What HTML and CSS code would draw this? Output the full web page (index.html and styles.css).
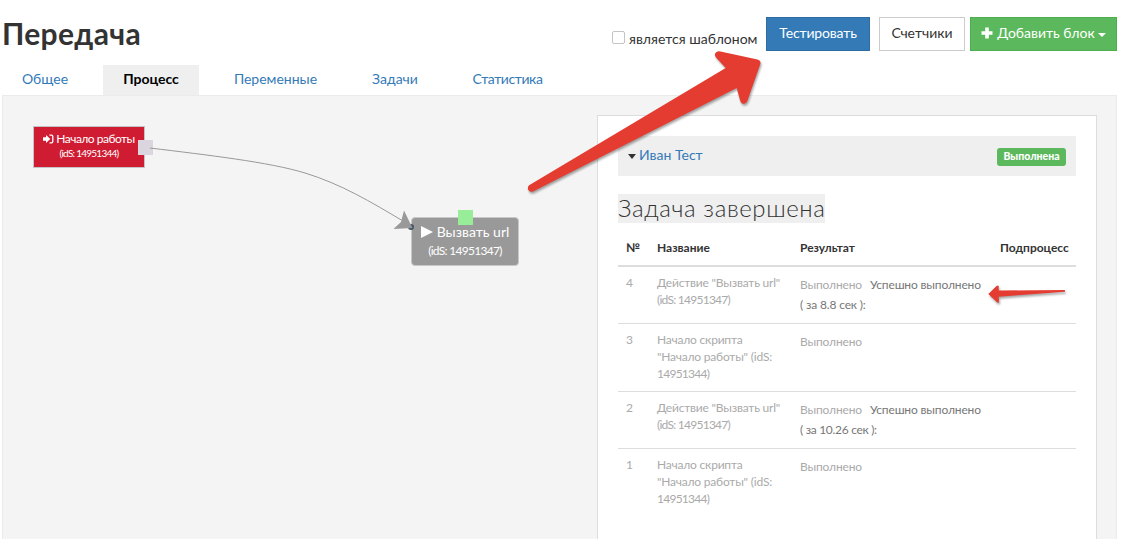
FILE: index.html
```html
<!DOCTYPE html>
<html lang="ru">
<head>
  <meta charset="UTF-8">
  <meta name="viewport" content="width=device-width, initial-scale=1.0">
  <title>Передача</title>
  <link rel="stylesheet" href="styles.css">
</head>
<body>
  <header class="header">
    <h1>Передача</h1>
    <div class="toolbar">
      <label class="template"><input type="checkbox"><span>является шаблоном</span></label>
      <button class="btn btn-primary">Тестировать</button>
      <button class="btn btn-default">Счетчики</button>
      <button class="btn btn-success">
        <svg class="plus" viewBox="0 0 12 12"><path d="M4.2 0.5h3.6v3.700h3.700v3.600H7.800v3.700H4.200V7.800H0.500V4.200h3.700z"/></svg>
        <span>Добавить блок</span>
        <i class="caret"></i>
      </button>
    </div>
  </header>

  <nav class="tabs">
    <a href="#">Общее</a>
    <a href="#" class="active">Процесс</a>
    <a href="#">Переменные</a>
    <a href="#">Задачи</a>
    <a href="#" class="stats">Статистика</a>
  </nav>

  <main class="canvas">
    <svg class="link" viewBox="0 0 270 90">
      <path class="link-line" d="M3 12C60 19 122 26 158 37C194 48 224 66 256 85"/>
      <path class="link-arrow" d="M265.500 92L246.500 93L254 86L257 74.500z"/>
    </svg>
    <div class="node node-start">
      <div class="node-name">
        <svg class="icon-in" viewBox="0 0 11 10"><path d="M0 3.300h3V1l4.300 4L3 9V6.700H0z"/><path class="door" d="M6.500 1.200h2A1.300 1.300 0 0 1 9.800 2.500v5a1.300 1.300 0 0 1-1.300 1.300h-2"/></svg>
        <span>Начало работы</span>
      </div>
      <div class="node-id">(idS: 14951344)</div>
      <i class="port-out"></i>
    </div>
    <div class="node node-action">
      <i class="dot"></i>
      <div class="node-name">
        <svg class="icon-play" viewBox="0 0 12 12"><path d="M0 0L12 6L0 12z"/></svg>
        <span>Вызвать url</span>
      </div>
      <div class="node-id">(idS: 14951347)</div>
      <i class="port-in"></i>
    </div>

    <section class="panel">
      <div class="panel-head">
        <i class="caret"></i>
        <a href="#">Иван Тест</a>
        <span class="badge">Выполнена</span>
      </div>
      <h2><span>Задача завершена</span></h2>
      <table class="log">
        <thead>
          <tr>
            <th class="col-num">№</th>
            <th class="col-name">Название</th>
            <th class="col-result">Результат</th>
            <th class="col-sub">Подпроцесс</th>
          </tr>
        </thead>
        <tbody>
          <tr>
            <td>4</td>
            <td class="name">Действие "Вызвать url"<br><span class="sid">(idS: 14951347)</span></td>
            <td class="result">Выполнено<b>Успешно выполнено</b><br><em>( за 8.8 сек ):</em></td>
            <td></td>
          </tr>
          <tr>
            <td>3</td>
            <td class="name">Начало скрипта<br>"Начало работы" (idS:<br><span class="sid">14951344)</span></td>
            <td class="result">Выполнено</td>
            <td></td>
          </tr>
          <tr>
            <td>2</td>
            <td class="name">Действие "Вызвать url"<br><span class="sid">(idS: 14951347)</span></td>
            <td class="result">Выполнено<b>Успешно выполнено</b><br><em class="long">( за 10.26 сек ):</em></td>
            <td></td>
          </tr>
          <tr>
            <td>1</td>
            <td class="name">Начало скрипта<br>"Начало работы" (idS:<br><span class="sid">14951344)</span></td>
            <td class="result">Выполнено</td>
            <td></td>
          </tr>
        </tbody>
      </table>
    </section>
  </main>

  <svg class="pointers" viewBox="0 0 1136 539">
    <path d="M529.500 185L725.700 68L716 57.500Q714 55 715.500 53Q717 50.700 720.500 51.500L757.500 59.500Q761.500 60.800 760.300 64L747.500 100.500Q746 104 743.300 103.800Q740.800 103.500 740 100L736.700 88L533 191.500Q529.500 192.500 528 189.500Q527.300 186.500 529.500 185z"/>
    <path d="M988.300 294L996.500 286Q999 284.500 998.700 287V290.500L1065 290V291.700L998.700 296.800L999 301.500Q999 303.500 997 302.300z"/>
  </svg>
</body>
</html>
```
FILE: styles.css
```css
* {
  box-sizing: border-box;
}
body {
  margin: 0;
  height: 539px;
  padding: 0 19px 0 2px;
  overflow: hidden;
  background: #fff;
  color: #333;
  font-family: Lato, 'Open Sans', sans-serif;
  font-size: 14px;
  line-height: 20px;
}
a {
  color: #337ab7;
  text-decoration: none;
}
h1, h2 {
  margin: 0;
}
.header {
  display: flex;
  justify-content: space-between;
  height: 65px;
  padding-top: 17px;
}
h1 {
  font-size: 30px;
  line-height: 32px;
  font-weight: bold;
  letter-spacing: 0.35px;
}
.toolbar {
  display: flex;
}
.template {
  display: flex;
  width: 154px;
  padding-top: 12px;
  white-space: nowrap;
}
.template input {
  appearance: none;
  flex: none;
  width: 13px;
  height: 13px;
  margin: 2px 4px 0 0;
  border: 1px solid #c4c4c4;
  border-radius: 2px;
  background: #fff;
}
.btn {
  display: flex;
  align-items: center;
  justify-content: center;
  height: 34px;
  padding: 0 0 2px;
  border: 1px solid;
  font: inherit;
  white-space: nowrap;
}
.btn-primary {
  width: 104px;
  margin-right: 9px;
  background: #337ab7;
  border-color: #2e6da4;
  color: #fff;
  letter-spacing: -0.15px;
}
.btn-default {
  width: 86px;
  margin-right: 5px;
  background: #fff;
  border-color: #ccc;
  color: #333;
}
.btn-success {
  width: 147px;
  background: #5cb85c;
  border-color: #4cae4c;
  color: #fff;
}
.plus {
  width: 12px;
  height: 12px;
  margin-right: 4px;
  fill: #fff;
}
.caret {
  border: 4px solid transparent;
  border-top-color: currentColor;
  border-bottom: 0;
}
.btn-success .caret {
  margin: 3px 0 0 3px;
}
.tabs {
  display: grid;
  grid-template-columns: 86px 96px 123px 86px 109px;
  gap: 15px;
  height: 30px;
}
.tabs a {
  height: 30px;
  line-height: 28px;
  text-align: center;
}
.tabs .active {
  background: #efefef;
  color: #000;
  font-weight: bold;
}
.tabs .stats {
  letter-spacing: -0.4px;
}
.canvas {
  position: relative;
  display: flex;
  justify-content: flex-end;
  height: 460px;
  padding: 19px 19px 0 0;
  background: #f4f4f4;
  border: 1px solid #ebebeb;
}
/* blocks of the process scheme */
.node {
  position: absolute;
  color: #fff;
  text-align: center;
  white-space: nowrap;
}
.node-name {
  display: flex;
  align-items: center;
  justify-content: center;
}
.node svg {
  fill: #fff;
}
.node-start {
  left: 30px;
  top: 30px;
  width: 112px;
  height: 42px;
  padding-top: 4px;
  background: #d01c33;
  border: 1px solid #c4c4c4;
  font-size: 12px;
  line-height: 15px;
  letter-spacing: -0.5px;
}
.node-start .node-id {
  font-size: 10px;
  line-height: 14px;
  letter-spacing: -0.75px;
}
.icon-in {
  width: 11px;
  height: 10px;
  margin-right: 2px;
}
.icon-in .door {
  fill: none;
  stroke: #fff;
  stroke-width: 1.3;
}
.port-out {
  position: absolute;
  right: -9px;
  top: 13px;
  width: 15px;
  height: 15px;
  background: #dad5de;
}
.node-action {
  left: 408px;
  top: 121px;
  width: 108px;
  height: 49px;
  padding-top: 4px;
  background: #999;
  border: 1px solid #c8c8c8;
  border-radius: 4px;
}
.node-action .node-id {
  font-size: 12px;
  line-height: 17px;
  letter-spacing: -0.7px;
}
.icon-play {
  width: 12px;
  height: 12px;
  margin-right: 4px;
}
.port-in {
  position: absolute;
  left: 46px;
  top: -8px;
  width: 15px;
  height: 15px;
  background: #98ee98;
}
.dot {
  position: absolute;
  left: -4px;
  top: 6px;
  width: 6px;
  height: 6px;
  border-radius: 50%;
  background: #456;
}
.link {
  position: absolute;
  left: 144px;
  top: 40px;
  width: 270px;
  height: 90px;
  overflow: visible;
  z-index: 1;
}
.link-line {
  fill: none;
  stroke: #999;
}
.link-arrow {
  fill: #999;
}
.panel {
  width: 500px;
  height: 440px;
  padding: 20px;
  background: #fff;
  border: 1px solid #ddd;
}
.panel-head {
  display: flex;
  align-items: center;
  height: 40px;
  padding: 0 10px;
  background: #efefef;
}
.panel-head .caret {
  border-width: 5px 4.5px 0;
}
.panel-head a {
  margin: -2px 0 0 3px;
}
.badge {
  width: 69px;
  height: 18px;
  margin: 2px 0 0 auto;
  background: #5cb85c;
  border-radius: 3px;
  color: #fff;
  font-size: 10.5px;
  font-weight: 900;
  line-height: 17px;
  text-align: center;
}
h2 {
  display: flex;
  height: 56px;
  padding-top: 18px;
  font-size: 24px;
  font-weight: 300;
  line-height: 28px;
  letter-spacing: 0.6px;
}
h2 span {
  width: 207px;
  height: 29px;
  background: #efefef;
  white-space: nowrap;
}
.log {
  width: 458px;
  table-layout: fixed;
  border-collapse: separate;
  border-spacing: 0;
  font-size: 12px;
  line-height: 17px;
}
.log th, .log td {
  padding: 7px 8px 9px;
  text-align: left;
  vertical-align: top;
  white-space: nowrap;
}
.log th {
  height: 35px;
  border-bottom: 2px solid #ddd;
}
.log td {
  border-top: 1px solid #ddd;
  color: #aaa;
}
.log tbody tr:first-child td {
  border-top: 0;
}
.log .name {
  letter-spacing: -0.2px;
}
.log .sid {
  letter-spacing: -0.75px;
}
.log .result {
  padding: 8px;
  line-height: 20px;
  letter-spacing: -0.15px;
}
.result b, .result em {
  color: #777;
  font-style: normal;
  font-weight: normal;
}
.result b {
  margin-left: 8px;
}
.result .long {
  letter-spacing: -0.3px;
}
.col-num {
  width: 31px;
}
.col-name {
  width: 143px;
}
.col-result {
  width: 200px;
}
.col-sub {
  width: 84px;
}
/* red arrows over the page */
.pointers {
  position: absolute;
  left: 0;
  top: 0;
  width: 1136px;
  height: 539px;
  pointer-events: none;
  fill: #e43c30;
  filter: drop-shadow(1px 2px 1px rgba(0, 0, 0, 0.35));
}
```
